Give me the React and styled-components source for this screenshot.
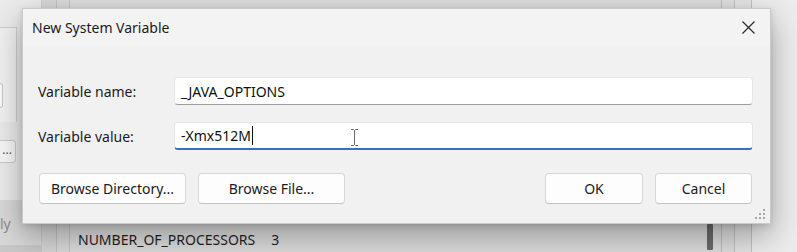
import React from 'react'
import styled, {createGlobalStyle} from 'styled-components'

const GlobalStyle = createGlobalStyle`
    html, body {
        margin: 0;
        padding: 0;
        background: #e4e4e4;
    }
    * {
        box-sizing: border-box;
    }
`

// ---- window behind the dialog ----

const Desktop = styled.div`
    position: relative;
    width: 797px;
    height: 252px;
    overflow: hidden;
    display: flex;
    background: #e6e6e6;
    font-family: "Noto Sans", "Open Sans", sans-serif;
    font-size: 14px;
    color: #1b1b1b;
`

const SidePanel = styled.div`
    width: 42px;
    display: flex;
    flex-direction: column;
    background: #ebebeb;
    border-right: 1px solid #c9c9c9;
`

const ListStub = styled.div`
    margin-top: 27px;
    width: 17px;
    height: 95px;
    border-top: 1px solid #cdcdcd;
    border-right: 1px solid #cdcdcd;
    background: #f1f1f1;
    padding-top: 55px;
`

const StubEdge = styled.div`
    width: 3px;
    height: 25px;
    border: 1px solid #c6c6c6;
    border-left: none;
    border-radius: 0 3px 3px 0;
    background: #fbfbfb;
`

const DotsButton = styled.div`
    margin-top: 18px;
    width: 16px;
    height: 23px;
    border: 1px solid #cbcbcb;
    border-left: none;
    border-radius: 0 4px 4px 0;
    background: #f7f7f7;
    font-size: 12px;
    line-height: 18px;
    color: #555;
    text-align: right;
    padding-right: 3px;
`

const SideFooter = styled.div`
    margin-top: 37px;
    flex: 1;
    display: flex;
    flex-direction: column;
    background: #d9d9d9;
`

const FooterLabel = styled.div`
    margin-top: 14px;
    height: 31px;
    font-size: 14px;
    color: #8c8c8c;
`

const FooterBase = styled.div`
    flex: 1;
    background: #c9c9c9;
`

const Strip = styled.div`
    width: ${p => p.w}px;
    background: ${p => p.bg};
    border-right: 1px solid #c2c2c2;
`

const ListPane = styled.div`
    flex: 1;
    display: flex;
    background: #dcdcdc;
    border-right: 1px solid #bdbdbd;
`

const ListBody = styled.div`
    flex: 1;
    display: flex;
    flex-direction: column;
    justify-content: flex-end;
`

const ListRow = styled.div`
    display: flex;
    gap: 16px;
    padding: 0 0 1px 8px;
    height: 24px;
    align-items: center;
    color: #1f1f1f;
`

const ScrollTrack = styled.div`
    width: 19px;
    display: flex;
    flex-direction: column;
    justify-content: flex-end;
    padding: 0 0 2px 5px;
`

const ScrollThumb = styled.div`
    width: 6px;
    height: 26px;
    background: #6a6a6a;
    border-radius: 1px;
`

const RightFill = styled.div`
    width: 45px;
    background: #ececec;
`

// ---- the dialog ----

const Dialog = styled.div`
    position: absolute;
    left: 22px;
    top: 8px;
    width: 749px;
    height: 216px;
    display: flex;
    flex-direction: column;
    background: #f1f1f1;
    border: 1px solid #cacaca;
    box-shadow: 0 12px 30px rgba(0, 0, 0, 0.32), 0 2px 6px rgba(0, 0, 0, 0.12);
`

const TitleBar = styled.div`
    height: 37px;
    display: flex;
    align-items: center;
    justify-content: space-between;
    padding-left: 9px;
    background: #f3f3f3;
`

const Title = styled.div`
    font-size: 14px;
    color: #1a1a1a;
`

const CloseButton = styled.div`
    width: 44px;
    height: 37px;
    display: flex;
    align-items: center;
    justify-content: center;
`

const Form = styled.div`
    flex: 1;
    display: flex;
    flex-direction: column;
    padding: 31px 17px 0 14px;
    gap: 17px;
`

const FieldRow = styled.div`
    display: grid;
    grid-template-columns: 137px 1fr;
    align-items: center;
`

const Label = styled.div`
    color: #1a1a1a;
    padding-left: 1px;
`

const Field = styled.div`
    position: relative;
    height: 28px;
    display: flex;
    align-items: center;
    padding: 0 6px;
    background: #ffffff;
    border: 1px solid #e6e6e6;
    border-bottom: ${p => p.focused ? '2px solid #2f74c0' : '1px solid #9c9c9c'};
    border-radius: 4px;
    color: #111;
`

const Caret = styled.span`
    display: inline-block;
    width: 1px;
    height: 19px;
    background: #111;
    margin-left: 1px;
`

const MouseCursor = styled.svg`
    position: absolute;
    left: 175px;
    top: 5px;
`

const ButtonRow = styled.div`
    display: flex;
    align-items: center;
    margin-top: 6px;
    padding: 0 1px 0 2px;
    gap: 12px;
`

const Button = styled.div`
    width: ${p => p.w}px;
    height: 31px;
    display: flex;
    align-items: center;
    justify-content: center;
    background: #fdfdfd;
    border: 1px solid #d6d6d6;
    border-bottom-color: #c2c2c2;
    border-radius: 4px;
    color: #1b1b1b;
`

const Spacer = styled.div`
    flex: 1;
`

const Grip = styled.svg`
    position: absolute;
    right: 4px;
    bottom: 3px;
`

function CloseIcon() {
    return (
        <svg width="13" height="13" viewBox="0 0 13 13">
            <path d="M0.5 0.5 L12.5 12.5 M12.5 0.5 L0.5 12.5" stroke="#2a2a2a" strokeWidth="1.2" fill="none"/>
        </svg>
    )
}

export default function App() {
    return (
        <Desktop>
            <GlobalStyle/>

            <SidePanel>
                <ListStub><StubEdge/></ListStub>
                <DotsButton>...</DotsButton>
                <SideFooter>
                    <FooterLabel>ly</FooterLabel>
                    <FooterBase/>
                </SideFooter>
            </SidePanel>
            <Strip w={15} bg="#d6d6d6"/>
            <Strip w={13} bg="#dadada"/>
            <ListPane>
                <ListBody>
                    <ListRow>
                        <span>NUMBER_OF_PROCESSORS</span>
                        <span>3</span>
                    </ListRow>
                </ListBody>
                <ScrollTrack><ScrollThumb/></ScrollTrack>
            </ListPane>
            <Strip w={13} bg="#dedede"/>
            <Strip w={17} bg="#e4e4e4"/>
            <RightFill/>

            <Dialog>
                <TitleBar>
                    <Title>New System Variable</Title>
                    <CloseButton><CloseIcon/></CloseButton>
                </TitleBar>
                <Form>
                    <FieldRow>
                        <Label>Variable name:</Label>
                        <Field>_JAVA_OPTIONS</Field>
                    </FieldRow>
                    <FieldRow>
                        <Label>Variable value:</Label>
                        <Field focused>
                            -Xmx512M<Caret/>
                            <MouseCursor width="9" height="19" viewBox="0 0 9 19">
                                <path d="M1 1.5 H3.5 L4.5 2.5 L5.5 1.5 H8 M4.5 2.5 V16.5 M1 17.5 H3.5 L4.5 16.5 L5.5 17.5 H8"
                                      stroke="#ffffff" strokeWidth="2.6" fill="none"/>
                                <path d="M1 1.5 H3.5 L4.5 2.5 L5.5 1.5 H8 M4.5 2.5 V16.5 M1 17.5 H3.5 L4.5 16.5 L5.5 17.5 H8"
                                      stroke="#6a6a6a" strokeWidth="1" fill="none"/>
                            </MouseCursor>
                        </Field>
                    </FieldRow>
                    <ButtonRow>
                        <Button w={147}>Browse Directory...</Button>
                        <Button w={147}>Browse File...</Button>
                        <Spacer/>
                        <Button w={98}>OK</Button>
                        <Button w={97}>Cancel</Button>
                    </ButtonRow>
                </Form>
                <Grip width="11" height="11" viewBox="0 0 11 11">
                    <g fill="#a8a8a8">
                        <rect x="8" y="0" width="2" height="2"/>
                        <rect x="4" y="4" width="2" height="2"/>
                        <rect x="8" y="4" width="2" height="2"/>
                        <rect x="0" y="8" width="2" height="2"/>
                        <rect x="4" y="8" width="2" height="2"/>
                        <rect x="8" y="8" width="2" height="2"/>
                    </g>
                </Grip>
            </Dialog>
        </Desktop>
    )
}
